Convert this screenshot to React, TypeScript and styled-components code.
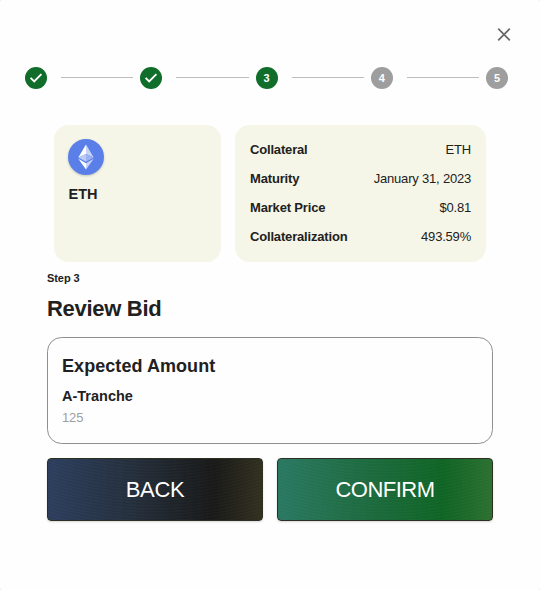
import React from "react";
import styled, { createGlobalStyle } from "styled-components";

const GlobalStyle = createGlobalStyle`
  *, *::before, *::after { box-sizing: border-box; }
  body {
    margin: 0;
    background: #e4e4e4;
    color: #212121;
    font-family: "Liberation Sans", Helvetica, Arial, sans-serif;
  }
  h2, h3, h4, p, dl, dt, dd, ol { margin: 0; padding: 0; }
`;

const Dialog = styled.main`
  width: 540px;
  height: 590px;
  display: flex;
  flex-direction: column;
  overflow: hidden;
  border-radius: 2px;
  background: #fefefe;
`;

const Header = styled.header`
  display: flex;
  justify-content: flex-end;
  padding: 24px 26px 0 0;
  height: 67px;
`;

const CloseButton = styled.button`
  width: 20px;
  height: 20px;
  padding: 0;
  border: 0;
  background: none;
  svg { display: block; }
`;

const Stepper = styled.ol`
  display: flex;
  align-items: center;
  list-style: none;
  height: 22px;
  padding: 0 32px 0 25px;
`;

const Step = styled.li<{ $active: boolean }>`
  flex: none;
  width: 22px;
  height: 22px;
  display: flex;
  align-items: center;
  justify-content: center;
  border-radius: 50%;
  background: ${(p) => (p.$active ? "#106d2a" : "#9e9e9e")};
  color: #fff;
  font-size: 11px;
  font-weight: 700;
  line-height: 22px;
`;

const Connector = styled.li`
  flex: 1;
  height: 1px;
  margin: -1px 7px 0 14px;
  background: #bdbdbd;
`;

const Cards = styled.section`
  display: grid;
  grid-template-columns: 167px 251px;
  grid-template-rows: 137px;
  column-gap: 14px;
  margin: 36px 0 0 54px;
`;

const Card = styled.div`
  border-radius: 14.5px;
  background: #f6f6e8;
  padding: 14px 14px 0;
`;

const TokenIcon = styled.svg`
  display: block;
  filter: drop-shadow(0 1px 1px rgba(0, 0, 0, 0.2));
`;

const TokenName = styled.h4`
  margin-top: 10px;
  padding-left: 0.5px;
  font-size: 14.5px;
  line-height: 18px;
`;

const Details = styled.dl`
  display: flex;
  flex-direction: column;
  padding: 0 1px;
  margin-top: -4px;
`;

const DetailRow = styled.div`
  display: flex;
  justify-content: space-between;
  font-size: 13px;
  line-height: 29px;
  dt {
    font-weight: 700;
    letter-spacing: -0.17px;
  }
  dd {
    letter-spacing: -0.2px;
  }
`;

const Review = styled.section`
  display: flex;
  flex-direction: column;
  margin: 8px 47px 0;
`;

const StepLabel = styled.p`
  font-size: 11px;
  font-weight: 700;
  line-height: 16px;
  letter-spacing: -0.08px;
`;

const Title = styled.h2`
  margin-top: 9px;
  font-size: 22px;
  line-height: 28px;
  letter-spacing: -0.3px;
`;

const Summary = styled.div`
  height: 107px;
  margin-top: 14px;
  padding: 15px 14px;
  border: 1px solid #8f8f8f;
  border-radius: 14.5px;
`;

const SummaryTitle = styled.h3`
  font-size: 18px;
  line-height: 26px;
  letter-spacing: 0.06px;
`;

const TrancheName = styled.h4`
  margin-top: 7px;
  font-size: 14.5px;
  line-height: 20px;
`;

const Amount = styled.p`
  margin-top: 2px;
  color: #9e9e9e;
  font-size: 13px;
  line-height: 20px;
  letter-spacing: -0.15px;
`;

const Actions = styled.div`
  display: grid;
  grid-template-columns: 1fr 1fr;
  gap: 14px;
  margin-top: 14px;
`;

const ActionButton = styled.button<{ $kind: "back" | "confirm" }>`
  height: 63px;
  padding: 0;
  border: 1px solid #2b3022;
  border-radius: 4px;
  color: #fff;
  font-family: inherit;
  font-size: 22px;
  line-height: 28px;
  letter-spacing: ${(p) => (p.$kind === "back" ? "-0.3px" : "-0.5px")};
  box-shadow: 0 1px 2px rgba(60, 20, 50, 0.18);
  background:
    repeating-radial-gradient(circle at 50% -320px, rgba(255, 255, 255, 0.02) 0 1px, transparent 2px 3px),
    ${(p) =>
      p.$kind === "back"
        ? "linear-gradient(91deg, #2b3d5b 3%, #242e3b 40%, #181918 77%, #31301f 100%)"
        : "linear-gradient(91deg, #29775f 3%, #1d6b40 40%, #0f6424 77%, #2c7030 100%)"};
`;

const Check = () => (
  <svg width="22" height="22" viewBox="0 0 22 22" fill="none">
    <path d="M5.6 10.9 9.2 14.4 16.4 7.2" stroke="#fff" strokeWidth="1.9" />
  </svg>
);

const EthIcon = () => (
  <TokenIcon width="36" height="36" viewBox="0 0 36 36">
    <circle cx="18" cy="18" r="18" fill="#5b7fe8" />
    <path d="M18 5.5 10.3 18.4 18 15Z" fill="#fff" />
    <path d="M18 5.5 25.7 18.4 18 15Z" fill="#c7d3f7" />
    <path d="M10.3 18.4 18 14.9V22.8Z" fill="#bccaf6" />
    <path d="M25.7 18.4 18 14.9V22.8Z" fill="#9db1f1" />
    <path d="M10.3 19.8 18 24.2V30.4Z" fill="#fff" />
    <path d="M25.7 19.8 18 24.2V30.4Z" fill="#c7d3f7" />
  </TokenIcon>
);

const steps = [
  { number: 1, done: true, active: true },
  { number: 2, done: true, active: true },
  { number: 3, done: false, active: true },
  { number: 4, done: false, active: false },
  { number: 5, done: false, active: false },
];

const details = [
  ["Collateral", "ETH"],
  ["Maturity", "January 31, 2023"],
  ["Market Price", "$0.81"],
  ["Collateralization", "493.59%"],
];

export default function App() {
  return (
    <>
      <GlobalStyle />
      <Dialog>
        <Header>
          <CloseButton aria-label="Close">
            <svg width="20" height="20" viewBox="0 0 20 20">
              <path d="M4.2 4.7 15.8 16.3M15.8 4.7 4.2 16.3" stroke="#6a6a6a" strokeWidth="1.7" />
            </svg>
          </CloseButton>
        </Header>
        <Stepper>
          {steps.map((step, i) => (
            <React.Fragment key={step.number}>
              {i > 0 && <Connector aria-hidden />}
              <Step $active={step.active}>{step.done ? <Check /> : step.number}</Step>
            </React.Fragment>
          ))}
        </Stepper>
        <Cards>
          <Card>
            <EthIcon />
            <TokenName>ETH</TokenName>
          </Card>
          <Card>
            <Details>
              {details.map(([label, value]) => (
                <DetailRow key={label}>
                  <dt>{label}</dt>
                  <dd>{value}</dd>
                </DetailRow>
              ))}
            </Details>
          </Card>
        </Cards>
        <Review>
          <StepLabel>Step 3</StepLabel>
          <Title>Review Bid</Title>
          <Summary>
            <SummaryTitle>Expected Amount</SummaryTitle>
            <TrancheName>A-Tranche</TrancheName>
            <Amount>125</Amount>
          </Summary>
          <Actions>
            <ActionButton $kind="back">BACK</ActionButton>
            <ActionButton $kind="confirm">CONFIRM</ActionButton>
          </Actions>
        </Review>
      </Dialog>
    </>
  );
}
